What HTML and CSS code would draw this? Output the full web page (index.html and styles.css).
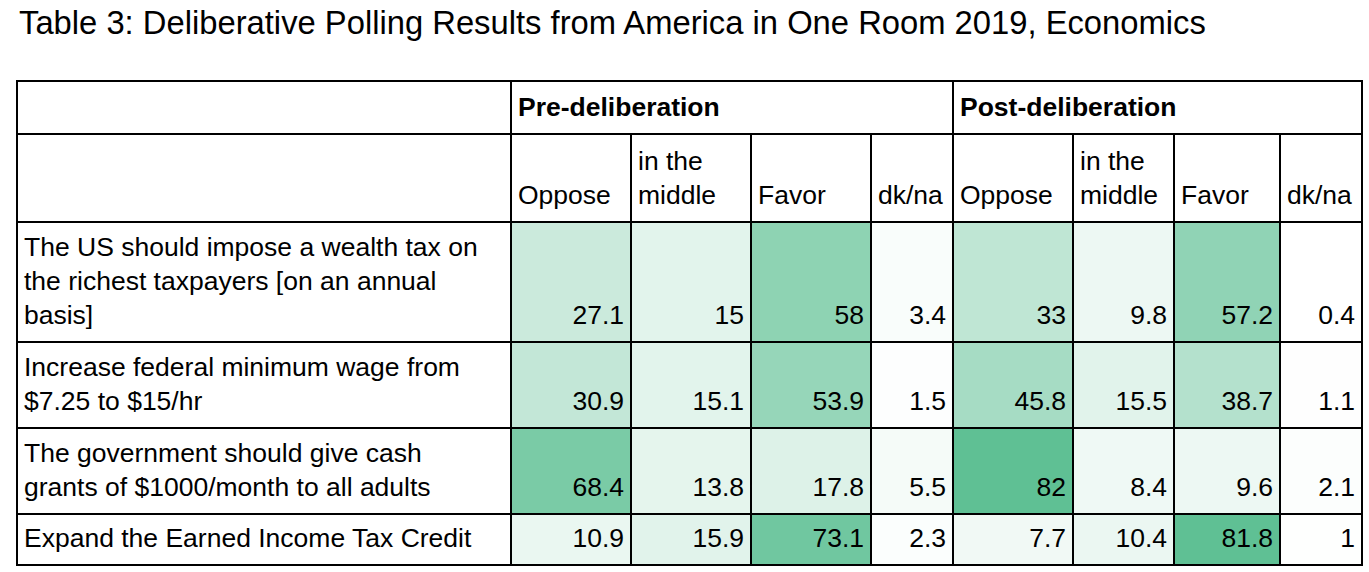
FILE: index.html
```html
<!DOCTYPE html>
<html>
<head>
<meta charset="utf-8">
<link rel="stylesheet" href="styles.css">
</head>
<body>
<h1 class="title">Table 3: Deliberative Polling Results from America in One Room 2019, Economics</h1>
<table class="results">
  <colgroup>
    <col class="c-q"><col class="c-a"><col class="c-a"><col class="c-a"><col class="c-dk">
    <col class="c-a"><col class="c-m2"><col class="c-f2"><col class="c-dk">
  </colgroup>
  <tr class="r-group">
    <td></td>
    <td class="group" colspan="4">Pre-deliberation</td>
    <td class="group" colspan="4">Post-deliberation</td>
  </tr>
  <tr class="r-head">
    <td></td>
    <td>Oppose</td><td>in the middle</td><td>Favor</td><td>dk/na</td>
    <td>Oppose</td><td>in the middle</td><td>Favor</td><td>dk/na</td>
  </tr>
  <tr class="r-3">
    <td class="q">The US should impose a wealth tax on the richest taxpayers [on an annual basis]</td>
    <td class="n" style="--p:32.7%">27.1</td><td class="n" style="--p:17.9%">15</td><td class="n" style="--p:70.6%">58</td><td class="n" style="--p:3.7%">3.4</td>
    <td class="n" style="--p:40%">33</td><td class="n" style="--p:11.5%">9.8</td><td class="n" style="--p:69.6%">57.2</td><td class="n" style="--p:0%">0.4</td>
  </tr>
  <tr class="r-2">
    <td class="q">Increase federal minimum wage from $7.25 to $15/hr</td>
    <td class="n" style="--p:37.4%">30.9</td><td class="n" style="--p:18%">15.1</td><td class="n" style="--p:65.6%">53.9</td><td class="n" style="--p:1.3%">1.5</td>
    <td class="n" style="--p:55.6%">45.8</td><td class="n" style="--p:18.5%">15.5</td><td class="n" style="--p:46.9%">38.7</td><td class="n" style="--p:0.9%">1.1</td>
  </tr>
  <tr class="r-2">
    <td class="q">The government should give cash grants of $1000/month to all adults</td>
    <td class="n" style="--p:83.3%">68.4</td><td class="n" style="--p:16.4%">13.8</td><td class="n" style="--p:21.3%">17.8</td><td class="n" style="--p:6.3%">5.5</td>
    <td class="n" style="--p:100%">82</td><td class="n" style="--p:9.8%">8.4</td><td class="n" style="--p:11.3%">9.6</td><td class="n" style="--p:2.1%">2.1</td>
  </tr>
  <tr class="r-1">
    <td class="q">Expand the Earned Income Tax Credit</td>
    <td class="n" style="--p:12.9%">10.9</td><td class="n" style="--p:19%">15.9</td><td class="n" style="--p:89.1%">73.1</td><td class="n" style="--p:2.3%">2.3</td>
    <td class="n" style="--p:8.9%">7.7</td><td class="n" style="--p:12.3%">10.4</td><td class="n" style="--p:99.8%">81.8</td><td class="n" style="--p:0.7%">1</td>
  </tr>
</table>
</body>
</html>
```
FILE: styles.css
```css
html, body {
  margin: 0;
  background: #fff;
}
body {
  font-family: "Liberation Sans", Arial, sans-serif;
  color: #000;
  padding: 0 0 0 16px;
}
.title {
  margin: 0;
  padding: 4px 0 0 3px;
  font-size: 32.75px;
  font-weight: normal;
  line-height: 38px;
  height: 80px;
  box-sizing: border-box;
  white-space: nowrap;
}
.results {
  border-collapse: collapse;
  table-layout: fixed;
  width: 1345px;
  font-size: 26.5px;
  line-height: 34px;
}
.results td {
  border: 2px solid #000;
  padding: 0 6px 9px 6px;
  vertical-align: bottom;
  text-align: left;
  overflow: hidden;
}
.results td.q { padding-right: 18px; }
.c-q { width: 494px; }
.c-a { width: 120px; }
.c-dk { width: 82px; }
.c-m2 { width: 101px; }
.c-f2 { width: 106px; }
.results td.group { font-weight: bold; }
.r-group { height: 53px; }
.r-head { height: 88px; }
.r-3 { height: 120px; }
.r-2 { height: 86px; }
.r-1 { height: 51px; }
.results td.n {
  text-align: right;
  background: color-mix(in srgb, #5fc094 var(--p), #ffffff);
}
```
